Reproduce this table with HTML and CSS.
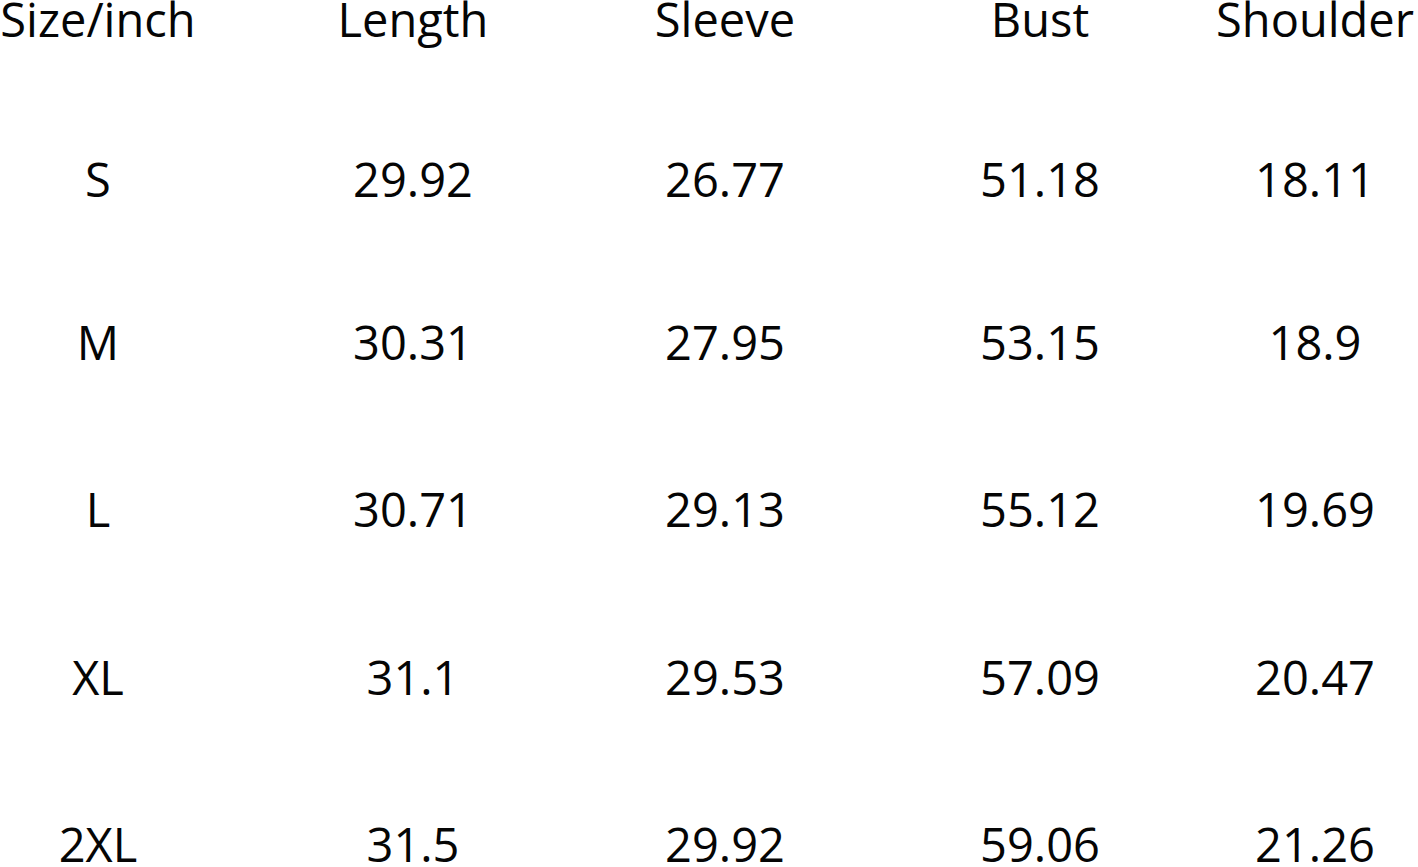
FILE: index.html
```html
<!DOCTYPE html>
<html lang="en">
<head>
<meta charset="utf-8">
<title>Size chart</title>
<link rel="stylesheet" href="styles.css">
</head>
<body>
<div class="chart">
  <div class="cell">Size/inch</div><div class="cell">Length</div><div class="cell">Sleeve</div><div class="cell">Bust</div><div class="cell">Shoulder</div>
  <div class="cell">S</div><div class="cell">29.92</div><div class="cell">26.77</div><div class="cell">51.18</div><div class="cell">18.11</div>
  <div class="cell">M</div><div class="cell">30.31</div><div class="cell">27.95</div><div class="cell">53.15</div><div class="cell">18.9</div>
  <div class="cell">L</div><div class="cell">30.71</div><div class="cell">29.13</div><div class="cell">55.12</div><div class="cell">19.69</div>
  <div class="cell">XL</div><div class="cell">31.1</div><div class="cell">29.53</div><div class="cell">57.09</div><div class="cell">20.47</div>
  <div class="cell">2XL</div><div class="cell">31.5</div><div class="cell">29.92</div><div class="cell">59.06</div><div class="cell">21.26</div>
</div>
</body>
</html>
```
FILE: styles.css
```css
html, body {
  margin: 0;
  padding: 0;
  background: #ffffff;
  overflow: hidden;
}
.chart {
  display: grid;
  grid-template-columns: 196px 434px 190px 440px 110px;
  grid-template-rows: 160px 163px 167px 168px 167px 64px;
  margin-top: -13px;
  font-family: "Open Sans", "Noto Sans", sans-serif;
  font-size: 47px;
  line-height: 64px;
  color: #050505;
  width: 1418px;
}
.cell {
  display: flex;
  justify-content: center;
  align-items: flex-start;
  white-space: nowrap;
}
```
